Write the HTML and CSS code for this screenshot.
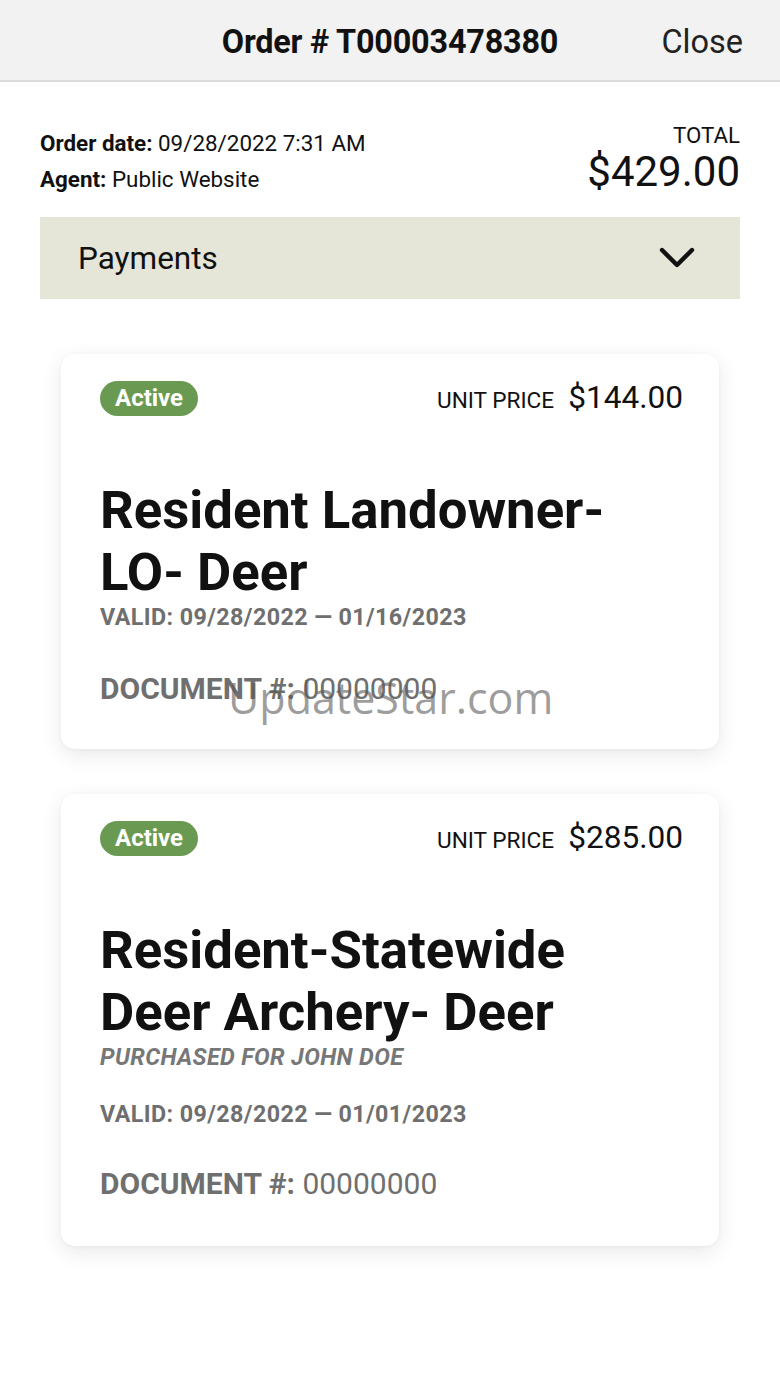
FILE: index.html
```html
<!DOCTYPE html>
<html lang="en">
<head>
<meta charset="utf-8">
<title>Order T00003478380</title>
<link rel="stylesheet" href="styles.css">
</head>
<body>
<header class="topbar">
  <span class="spacer"></span>
  <h1 class="topbar-title">Order # T00003478380</h1>
  <a class="close-link">Close</a>
</header>
<main class="content">
  <section class="summary">
    <div class="meta">
      <p class="meta-line"><b>Order date:</b> 09/28/2022 7:31 AM</p>
      <p class="meta-line"><b>Agent:</b> Public Website</p>
    </div>
    <div class="total">
      <div class="total-label">TOTAL</div>
      <div class="total-value">$429.00</div>
    </div>
  </section>
  <div class="payments">
    <span class="payments-label">Payments</span>
    <svg class="chevron" width="36" height="22" viewBox="0 0 36 22"><path d="M3 3 L18 18 L33 3" fill="none" stroke="#111" stroke-width="4.4" stroke-linecap="round" stroke-linejoin="round"/></svg>
  </div>
  <div class="cards">
    <article class="card">
      <div class="card-top">
        <span class="badge">Active</span>
        <span class="price"><span class="price-label">UNIT PRICE</span><span class="price-value">$144.00</span></span>
      </div>
      <h2 class="card-title">Resident Landowner-<br>LO- Deer</h2>
      <div class="valid">VALID: 09/28/2022 — 01/16/2023</div>
      <div class="doc"><b>DOCUMENT #:</b> 00000000</div>
    </article>
    <article class="card card-alt">
      <div class="card-top">
        <span class="badge">Active</span>
        <span class="price"><span class="price-label">UNIT PRICE</span><span class="price-value">$285.00</span></span>
      </div>
      <h2 class="card-title">Resident-Statewide<br>Deer Archery- Deer</h2>
      <div class="purchased">PURCHASED FOR JOHN DOE</div>
      <div class="valid valid-spaced">VALID: 09/28/2022 — 01/01/2023</div>
      <div class="doc doc-alt"><b>DOCUMENT #:</b> 00000000</div>
    </article>
  </div>
</main>
<div class="watermark">UpdateStar.com</div>
</body>
</html>
```
FILE: styles.css
```css
html, body {
  margin: 0;
  padding: 0;
  background: #ffffff;
}
body {
  font-family: Roboto, "Liberation Sans", Arial, sans-serif;
  color: #111;
  position: relative;
  min-height: 1387px;
}
.topbar {
  height: 77px;
  padding-top: 3px;
  background: #f2f2f2;
  border-bottom: 2px solid #dcdcdc;
  display: grid;
  grid-template-columns: 1fr auto 1fr;
  align-items: center;
}
.topbar-title {
  margin: 0;
  font-size: 32.4px;
  font-weight: 700;
  color: #111;
  letter-spacing: -0.2px;
}
.close-link {
  justify-self: end;
  padding-right: 37px;
  font-size: 32.5px;
  color: #222;
}
.content {
  padding: 0 40px;
}
.summary {
  display: flex;
  justify-content: space-between;
  align-items: flex-start;
  padding-top: 40px;
}
.meta {
  padding-top: 3px;
}
.meta-line {
  margin: 0;
  font-size: 22.4px;
  line-height: 36px;
  color: #111;
}
.meta-line b {
  font-weight: 700;
}
.total {
  text-align: right;
}
.total-label {
  font-size: 22.3px;
  line-height: 26px;
  color: #111;
}
.total-value {
  font-size: 42px;
  line-height: 48px;
  color: #111;
}
.payments {
  margin-top: 20px;
  height: 82px;
  background: #e5e5d8;
  display: flex;
  align-items: center;
  justify-content: space-between;
  padding: 0 45px 0 38px;
}
.payments-label {
  font-size: 31.5px;
  color: #111;
}
.chevron {
  display: block;
}
.cards {
  display: flex;
  flex-direction: column;
  gap: 45px;
  padding: 55px 21px 0;
}
.card {
  background: #fff;
  border-radius: 14px;
  box-shadow: 0 6px 22px rgba(0, 0, 0, 0.09), 0 1px 4px rgba(0, 0, 0, 0.04);
  padding: 27px 36px 43px 39px;
}
.card-alt {
  padding-bottom: 45px;
}
.card-top {
  display: flex;
  justify-content: space-between;
  align-items: center;
  height: 35px;
}
.badge {
  background: #6a9a52;
  color: #fff;
  font-weight: 700;
  font-size: 24px;
  line-height: 35px;
  padding: 0 15px;
  border-radius: 18px;
}
.price {
  display: flex;
  align-items: baseline;
  gap: 14px;
  line-height: 35px;
}
.price-label {
  font-size: 22.6px;
  color: #111;
}
.price-value {
  font-size: 31.6px;
  color: #111;
}
.card-title {
  margin: 63px 0 0;
  font-size: 52.7px;
  line-height: 62px;
  font-weight: 700;
  color: #111;
}
.valid {
  font-size: 23.3px;
  font-weight: 700;
  color: #6f6f6f;
  line-height: 28px;
  margin-top: 0;
  letter-spacing: 0.4px;
}
.valid-spaced {
  margin-top: 29px;
}
.purchased {
  font-size: 23.4px;
  font-weight: 700;
  font-style: italic;
  color: #777;
  line-height: 28px;
  margin-top: 0;
  letter-spacing: 0.36px;
}
.doc {
  margin-top: 41px;
  font-size: 30px;
  line-height: 34px;
  color: #6f6f6f;
}
.doc-alt {
  margin-top: 39px;
}
.doc b {
  font-weight: 700;
}
.watermark {
  position: absolute;
  left: 228px;
  top: 668px;
  font-family: "Open Sans", "DejaVu Sans", sans-serif;
  font-size: 43px;
  color: rgba(90, 90, 90, 0.6);
  pointer-events: none;
}
```
